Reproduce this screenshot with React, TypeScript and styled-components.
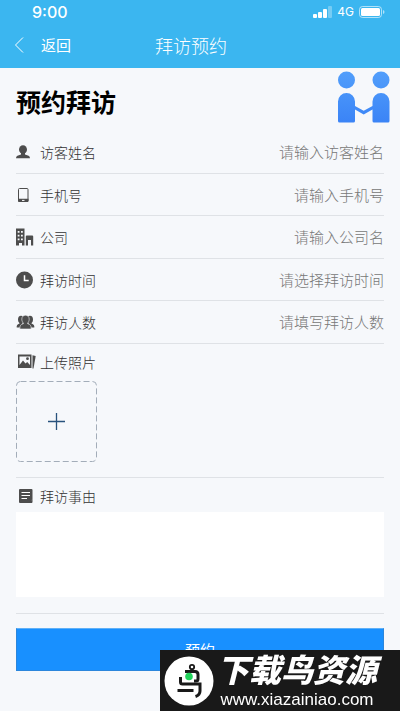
import React from "react";
import styled, { createGlobalStyle } from "styled-components";

const GlobalStyle = createGlobalStyle`
  *, *::before, *::after { box-sizing: border-box; }
  body {
    margin: 0;
    background: #f6f8fb;
    color: #333;
    font-family: "Noto Sans CJK SC", "Liberation Sans", sans-serif;
  }
  button, input, textarea { font-family: inherit; margin: 0; }
`;

const Page = styled.div`
  position: relative;
  min-height: 100vh;
  padding-bottom: 40px;
`;

const Header = styled.header`
  background: #3bb6f0;
  color: #fff;
`;

const StatusBar = styled.div`
  display: flex;
  align-items: center;
  justify-content: space-between;
  height: 23px;
  padding: 0 15px 0 32px;
`;

const Clock = styled.span`
  font: 500 16px/22px Inter, "Liberation Sans", sans-serif;
`;

const StatusIcons = styled.div`
  display: flex;
  align-items: center;
  gap: 5px;
  font: 400 12px/22px Inter, "Liberation Sans", sans-serif;
`;

const NavBar = styled.nav`
  display: grid;
  grid-template-columns: 1fr auto 1fr;
  align-items: center;
  height: 45px;
  padding: 0 32px 2px 14px;
`;

const BackButton = styled.button`
  display: flex;
  align-items: center;
  gap: 17px;
  justify-self: start;
  padding: 0;
  border: 0;
  background: none;
  color: inherit;
  font-size: 15px;
  line-height: 24px;
`;

const NavTitle = styled.span`
  font-size: 18px;
  font-weight: 300;
  line-height: 26px;
`;

const Main = styled.main`
  padding: 0 16px;
`;

const Hero = styled.div`
  display: flex;
  justify-content: space-between;
  align-items: flex-start;
  height: 63px;
  padding-top: 2px;
`;

const Heading = styled.h1`
  margin: 0;
  padding-top: 14px;
  color: #000;
  font-size: 25px;
  font-weight: 700;
  line-height: 34px;
`;

const HeroArt = styled.svg`
  margin-right: -8px;
`;

const FieldRow = styled.div`
  display: flex;
  align-items: center;
  height: 42px;
  border-bottom: 1px solid #dfe2e6;
  &:nth-child(odd) { height: 43px; }
`;

const Label = styled.label`
  display: flex;
  align-items: center;
  gap: 4px;
  flex: none;
  font-size: 14px;
  font-weight: 300;
  line-height: 18px;
`;

const IconSlot = styled.span`
  display: flex;
  width: 20px;
  height: 18px;
`;

const TextInput = styled.input`
  flex: 1;
  min-width: 0;
  padding: 0;
  border: 0;
  outline: 0;
  background: none;
  color: #333;
  font-size: 15px;
  font-weight: 300;
  line-height: 24px;
  text-align: right;
  &::placeholder { color: #777; opacity: 1; }
`;

const Section = styled.section<{ $bottom: number }>`
  padding: 9px 0 ${(p) => p.$bottom}px;
  border-bottom: 1px solid #dfe2e6;
`;

const UploadButton = styled.button`
  display: block;
  width: 81px;
  height: 81px;
  margin-top: 10px;
  padding: 0;
  border: 0;
  background: none;
`;

const Reason = styled.textarea`
  display: block;
  width: 100%;
  height: 85px;
  margin-top: 7px;
  padding: 8px;
  border: 0;
  outline: 0;
  resize: none;
  background: #fff;
  font-size: 14px;
`;

const Submit = styled.button`
  display: block;
  width: 100%;
  height: 43px;
  margin-top: 14px;
  padding: 0;
  border: 1px solid #2b86dc;
  border-top-color: #5fb0f7;
  background: #1890ff;
  color: #fff;
  font-size: 15px;
  line-height: 24px;
`;

const Banner = styled.aside`
  position: fixed;
  right: 0;
  bottom: 0;
  display: flex;
  align-items: center;
  gap: 3px;
  width: 240px;
  height: 61px;
  padding-left: 4px;
  background: #191919;
  color: #fff;
`;

const BannerText = styled.div`
  display: flex;
  flex-direction: column;
  align-items: center;
  gap: 5px;
  white-space: nowrap;
`;

const BannerName = styled.strong`
  font-size: 32px;
  font-weight: 900;
  font-style: italic;
  line-height: 34px;
`;

const BannerLink = styled.a`
  color: inherit;
  font: 400 17px/20px "Liberation Sans", sans-serif;
  text-decoration: none;
`;

const ink = "#4d4d4d";

const UserIcon = () => (
  <svg width="18" height="18" viewBox="0 0 18 18" fill={ink} aria-hidden="true">
    <ellipse cx="7" cy="6.500" rx="4" ry="4.300" />
    <path d="M5 9.500h4v2l3.600 1.200q1.400.6 1.400 2.600H0q0-2 1.400-2.600L5 11.500z" />
  </svg>
);

const PhoneIcon = () => (
  <svg width="18" height="18" viewBox="0 0 18 18" aria-hidden="true">
    <rect x="2.500" y="2.500" width="9.500" height="13" rx="1" fill="none" stroke={ink} />
    <path d="M2 12.800h10.500v2.200q0 1-1 1H3q-1 0-1-1z" fill={ink} />
    <path d="M6 14.400h2.500" stroke="#fff" />
  </svg>
);

const CompanyIcon = () => (
  <svg width="18" height="18" viewBox="0 0 18 18" fill={ink} aria-hidden="true">
    <path
      fillRule="evenodd"
      d="M0 .500h8.500V17.500H6v-2.500H3v2.500H0zM1.700 3v1.800h1.800V3zM5 3v1.800h1.800V3zM1.700 6.700v1.800h1.800V6.700zM5 6.700v1.800h1.800V6.700zM1.700 10.400v1.800h1.800v-1.800zM5 10.400v1.800h1.800v-1.800zM9.800 8.500q0-1 1-1h5.400q1 0 1 1v9H15V12h-3v5.500H9.800z"
    />
  </svg>
);

const ClockIcon = () => (
  <svg width="18" height="18" viewBox="0 0 18 18" aria-hidden="true">
    <circle cx="8.500" cy="9" r="8.500" fill={ink} />
    <path d="M8.500 4.300v5.200h4.200" fill="none" stroke="#fff" strokeWidth="1.500" />
  </svg>
);

const GroupIcon = () => (
  <svg width="20" height="18" viewBox="0 0 20 18" aria-hidden="true">
    <g fill={ink}>
      <ellipse cx="5" cy="6.500" rx="3" ry="3.800" />
      <ellipse cx="14" cy="6.500" rx="3" ry="3.800" />
      <path d="M3.500 8.500h3v6H.7q-.5-2.800 2.800-4zM15.500 8.500h-3v6h5.800q.5-2.800-2.800-4z" />
    </g>
    <path
      d="M9.500 2.200c2.300 0 3.700 1.700 3.700 4 0 1.500-.700 3-1.500 3.800v.700c2.500.8 3.600 1.800 3.500 5.300H3.800c-.1-3.500 1-4.500 3.500-5.300V10c-.8-.8-1.500-2.300-1.500-3.800 0-2.300 1.400-4 3.700-4z"
      fill={ink}
      stroke="#f6f8fb"
      strokeWidth=".6"
    />
  </svg>
);

const PhotoIcon = () => (
  <svg width="20" height="18" viewBox="0 0 20 18" aria-hidden="true">
    <path
      fillRule="evenodd"
      d="M2 1.500h13.500V15H2zM3.500 3.500v8.500L7 7.500l2.500 3 1.700-1.500 2.800 3V3.500z"
      fill={ink}
    />
    <circle cx="11.500" cy="5.700" r="1.400" fill={ink} />
    <path d="M16.500 2.200l3.200.8L17.500 15.500h-1z" fill={ink} />
  </svg>
);

const NoteIcon = () => (
  <svg width="20" height="18" viewBox="0 0 20 18" aria-hidden="true">
    <path d="M4 2h11.500q1 0 1 1v9l-1 1.200V16H4q-1 0-1-1V3q0-1 1-1z" fill={ink} />
    <path d="M13 16h2.500q1 0 1-1v-3z" fill={ink} />
    <path d="M5.500 5.500h8.500M5.500 8.500h8.500M5.500 11.500H11" stroke="#fff" strokeWidth="1.200" />
  </svg>
);

const fields = [
  { id: "name", label: "访客姓名", hint: "请输入访客姓名", Icon: UserIcon },
  { id: "phone", label: "手机号", hint: "请输入手机号", Icon: PhoneIcon },
  { id: "company", label: "公司", hint: "请输入公司名", Icon: CompanyIcon },
  { id: "time", label: "拜访时间", hint: "请选择拜访时间", Icon: ClockIcon },
  { id: "count", label: "拜访人数", hint: "请填写拜访人数", Icon: GroupIcon },
];

export default function App() {
  return (
    <Page>
      <GlobalStyle />
      <Header>
        <StatusBar>
          <Clock>9:00</Clock>
          <StatusIcons>
            <svg width="19" height="12" viewBox="0 0 19 12" fill="#fff" aria-hidden="true">
              <rect x="0" y="8" width="4" height="4" rx="1" />
              <rect x="5" y="6" width="4" height="6" rx="1" />
              <rect x="10" y="3" width="4" height="9" rx="1" />
              <rect x="15" y="0" width="4" height="12" rx="1" opacity=".3" />
            </svg>
            4G
            <svg width="26" height="12" viewBox="0 0 26 12" aria-hidden="true">
              <rect x=".5" y=".5" width="22" height="11" rx="3" fill="none" stroke="#fff" opacity=".6" />
              <rect x="2" y="2" width="19" height="8" rx="1.500" fill="#fff" />
              <path d="M24 4q1.500.5 1.500 2T24 8z" fill="#fff" opacity=".6" />
            </svg>
          </StatusIcons>
        </StatusBar>
        <NavBar>
          <BackButton type="button">
            <svg width="10" height="18" viewBox="0 0 10 18" fill="none" stroke="#fff" aria-hidden="true">
              <path d="M9 1.500L1.500 9 9 16.500" />
            </svg>
            返回
          </BackButton>
          <NavTitle>拜访预约</NavTitle>
        </NavBar>
      </Header>
      <Main>
        <Hero>
          <Heading>预约拜访</Heading>
          <HeroArt width="54" height="54" viewBox="0 0 54 54" aria-hidden="true">
            <defs>
              <linearGradient id="people" gradientUnits="userSpaceOnUse" x1="0" y1="0" x2="0" y2="54">
                <stop offset="0" stopColor="#529ffb" />
                <stop offset="1" stopColor="#3a83f6" />
              </linearGradient>
            </defs>
            <g fill="url(#people)">
              <circle cx="8.500" cy="10" r="8.500" />
              <circle cx="43" cy="10" r="8.500" />
              <path d="M0 31.500a8.500 8.500 0 0 1 17 0v4.500l8.700 4.800L34.500 36v-4.500a8.500 8.500 0 0 1 17 0V51q0 1.500-1.500 1.500H36q-1.500 0-1.500-1.500V39.500L25.700 44.500 17 39.500V51q0 1.500-1.500 1.500h-14Q0 52.500 0 51z" />
            </g>
          </HeroArt>
        </Hero>
        <div>
          {fields.map(({ id, label, hint, Icon }) => (
            <FieldRow key={id}>
              <Label htmlFor={id}>
                <IconSlot><Icon /></IconSlot>
                {label}
              </Label>
              <TextInput id={id} placeholder={hint} />
            </FieldRow>
          ))}
        </div>
        <Section $bottom={15}>
          <Label htmlFor="photo">
            <IconSlot><PhotoIcon /></IconSlot>
            上传照片
          </Label>
          <UploadButton id="photo" type="button">
            <svg width="81" height="81" viewBox="0 0 81 81" fill="none" aria-hidden="true">
              <rect x=".5" y=".5" width="80" height="80" rx="4" stroke="#a3adb9" strokeDasharray="6 3" />
              <path d="M32 40.500h17M40.500 32v17" stroke="#28527d" strokeWidth="1.300" />
            </svg>
          </UploadButton>
        </Section>
        <Section $bottom={16}>
          <Label htmlFor="reason">
            <IconSlot><NoteIcon /></IconSlot>
            拜访事由
          </Label>
          <Reason id="reason" />
        </Section>
        <Submit type="button">预约</Submit>
      </Main>
      <Banner>
        <svg width="50" height="50" viewBox="0 0 50 50" aria-hidden="true">
          <circle cx="25" cy="25" r="24.500" fill="#fff" />
          <g fill="none" stroke="#191919" strokeWidth="3">
            <circle cx="28" cy="11" r="2.200" strokeWidth="1.800" />
            <path d="M21 15.500h10q3 0 3 3V23q0 2-2 2h-2" />
            <path d="M16.500 21v5q0 2 2 2h17.500v7q0 4-4.500 5.500M13.500 34.500h16" />
          </g>
          <circle cx="25" cy="20.500" r="3.800" fill="#22d35c" />
        </svg>
        <BannerText>
          <BannerName>下载鸟资源</BannerName>
          <BannerLink href="#">www.xiazainiao.com</BannerLink>
        </BannerText>
      </Banner>
    </Page>
  );
}
